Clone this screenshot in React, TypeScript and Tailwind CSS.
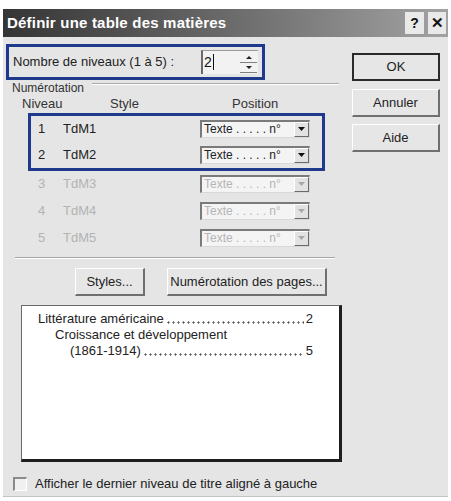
import React from 'react';

const levels = [
  { n: 1, style: 'TdM1', enabled: true },
  { n: 2, style: 'TdM2', enabled: true },
  { n: 3, style: 'TdM3', enabled: false },
  { n: 4, style: 'TdM4', enabled: false },
  { n: 5, style: 'TdM5', enabled: false },
];

function DropArrow({ disabled }: { disabled?: boolean }) {
  return (
    <svg width="7" height="4" viewBox="0 0 7 4">
      <path d="M0 0h7L3.5 4z" fill={disabled ? '#a8a8a8' : '#111'} />
    </svg>
  );
}

function PositionSelect({ disabled }: { disabled?: boolean }) {
  return (
    <div className="flex h-[18px] w-[110px] border-t-2 border-l-2 border-t-[#7a7a7a] border-l-[#7a7a7a] border-b border-r border-b-[#d8d8d8] border-r-[#d8d8d8] bg-[#f4f4f4]">
      <div
        className={`flex-1 pl-[2px] text-[12px] leading-[15px] whitespace-nowrap ${
          disabled ? 'text-[#b5b5b5]' : 'text-[#222]'
        }`}
      >
        Texte . . . . . n°
      </div>
      <div className="flex h-[15px] w-[15px] items-center justify-center border-t border-l border-t-white border-l-white border-b border-r border-b-[#6a6a6a] border-r-[#6a6a6a] bg-[#e2e2e2]">
        <DropArrow disabled={disabled} />
      </div>
    </div>
  );
}

function LevelRow({ n, style, enabled, h }: { n: number; style: string; enabled: boolean; h: string }) {
  return (
    <div className={`flex items-center ${h} ${enabled ? 'text-[#222]' : 'text-[#b3b3b3]'}`}>
      <span className="w-[25px] pl-[7px] text-[13px]">{n}</span>
      <span className="w-[144px] pl-[7px] text-[13px]">{style}</span>
      <PositionSelect disabled={!enabled} />
    </div>
  );
}

function Button3D({ label, className }: { label: string; className: string }) {
  return (
    <div
      className={`flex items-center justify-center border-t border-l border-t-white border-l-white border-b-2 border-r-2 border-b-[#6f6f6f] border-r-[#6f6f6f] bg-[#e6e6e6] text-[13px] text-[#222] ${className}`}
    >
      {label}
    </div>
  );
}

function LeaderLine({ text, page, indent }: { text: string; page: string; indent: string }) {
  return (
    <div className={`flex h-[16px] items-end text-[13px] leading-[16px] text-[#222] ${indent}`}>
      <span className="whitespace-nowrap">{text}</span>
      <span className="mx-[2px] mb-[3px] h-[3px] flex-1 bg-[radial-gradient(circle,#555_0.9px,transparent_1.2px)] bg-[length:5px_3px]" />
      <span>{page}</span>
    </div>
  );
}

export default function App() {
  return (
    <div className="w-[451px] h-[501px] bg-white pt-[9px] pl-[3px] font-['Liberation_Sans',Arial,sans-serif]">
      <div className="flex h-[488px] w-[445px] flex-col bg-[#e5e5e5] border-b border-[#c4c4c4]">
        {/* title bar */}
        <div className="flex h-[28px] items-center bg-gradient-to-r from-[#353535] via-[#6a6a6a] to-[#a3a3a3] pl-[4px] pr-[2px]">
          <span className="flex-1 text-[15px] font-bold text-white tracking-[0.2px]">
            Définir une table des matières
          </span>
          <div className="flex h-[22px] w-[19px] items-center justify-center bg-[#e9e9e9] text-[14px] font-bold text-[#111]">
            ?
          </div>
          <div className="ml-[4px] flex h-[22px] w-[18px] items-center justify-center bg-[#e9e9e9] text-[15px] font-bold text-[#111]">
            ✕
          </div>
        </div>

        <div className="flex">
          {/* left column */}
          <div className="w-[349px]">
            <div className="ml-[3px] mt-[7px] flex h-[36px] w-[259px] items-center border-[3px] border-[#1f3a8c] pl-[4px] pr-[4px]">
              <span className="flex-1 text-[13px] text-[#222]">Nombre de niveaux (1 à 5) :</span>
              <div className="flex h-[24px] w-[57px] items-center border-l-2 border-t border-l-[#6a6a6a] border-t-[#9a9a9a] bg-[#f2f2f2]">
                <span className="flex-1 pl-[1px] text-[14px] text-[#111]">
                  <span className="border-r border-[#111] pr-[1px]">2</span>
                </span>
                <div className="mr-[1px] flex w-[17px] flex-col">
                  <div className="flex h-[10px] items-center justify-center border-b border-[#808080]">
                    <svg width="6" height="3" viewBox="0 0 6 3">
                      <path d="M0 3h6L3 0z" fill="#222" />
                    </svg>
                  </div>
                  <div className="flex h-[10px] items-center justify-center border-b border-[#808080]">
                    <svg width="6" height="3" viewBox="0 0 6 3">
                      <path d="M0 0h6L3 3z" fill="#222" />
                    </svg>
                  </div>
                </div>
              </div>
            </div>

            <div className="flex items-start">
              <span className="ml-[9px] mt-[1px] text-[12px] leading-[14px] text-[#333]">Numérotation</span>
              <div className="ml-[8px] mt-[3px] flex-1 border-t border-b border-t-[#a9a9a9] border-b-white mr-[13px]" />
            </div>

            <div className="mt-[1px] flex h-[15px] items-center text-[13px] text-[#333]">
              <span className="ml-[19px] w-[88px]">Niveau</span>
              <span className="w-[122px]">Style</span>
              <span>Position</span>
            </div>

            <div className="ml-[25px] mt-[2px] w-[297px] border-[3px] border-[#1f3a8c]">
              <LevelRow {...levels[0]} h="h-[25px]" />
              <LevelRow {...levels[1]} h="h-[27px]" />
            </div>

            <div className="ml-[25px] -mt-[1px] w-[297px] border-x-[3px] border-transparent">
              {levels.slice(2).map((l) => (
                <LevelRow key={l.n} {...l} h="h-[27px]" />
              ))}
            </div>

            <div className="ml-[12px] mt-[6px] w-[320px] border-t border-b border-t-[#a6a6a6] border-b-white" />

            <div className="mt-[9px] flex">
              <Button3D label="Styles..." className="ml-[72px] h-[28px] w-[70px]" />
              <Button3D label="Numérotation des pages..." className="ml-[22px] h-[28px] w-[160px]" />
            </div>

            <div className="ml-[18px] mt-[9px] h-[157px] w-[321px] border-t border-l border-t-[#6a6a6a] border-l-[#6a6a6a] border-b-[3px] border-r-[3px] border-b-[#1e1e1e] border-r-[#1e1e1e] bg-white pt-[5px]">
              <div className="w-[291px]">
                <LeaderLine text="Littérature américaine" page="2" indent="pl-[16px]" />
                <div className="h-[16px] pl-[33px] text-[13px] leading-[16px] text-[#222]">
                  Croissance et développement
                </div>
                <LeaderLine text="(1861-1914)" page="5" indent="pl-[48px]" />
              </div>
            </div>

            <div className="mt-[12px] flex items-center">
              <div className="ml-[10px] h-[14px] w-[14px] border-t-2 border-l-2 border-t-[#8a8a8a] border-l-[#8a8a8a] border-b border-r border-b-white border-r-white bg-[#f0f0f0]" />
              <span className="ml-[8px] text-[13px] text-[#222]">
                Afficher le dernier niveau de titre aligné à gauche
              </span>
            </div>
          </div>

          {/* right column */}
          <div className="mt-[16px] flex w-[88px] flex-col">
            <div className="flex h-[28px] items-center justify-center border-2 border-[#2a2a2a] bg-[#e6e6e6] text-[13px] text-[#222]">
              OK
            </div>
            <Button3D label="Annuler" className="mt-[8px] h-[28px] w-[88px]" />
            <Button3D label="Aide" className="mt-[7px] h-[28px] w-[88px]" />
          </div>
        </div>
      </div>
    </div>
  );
}
